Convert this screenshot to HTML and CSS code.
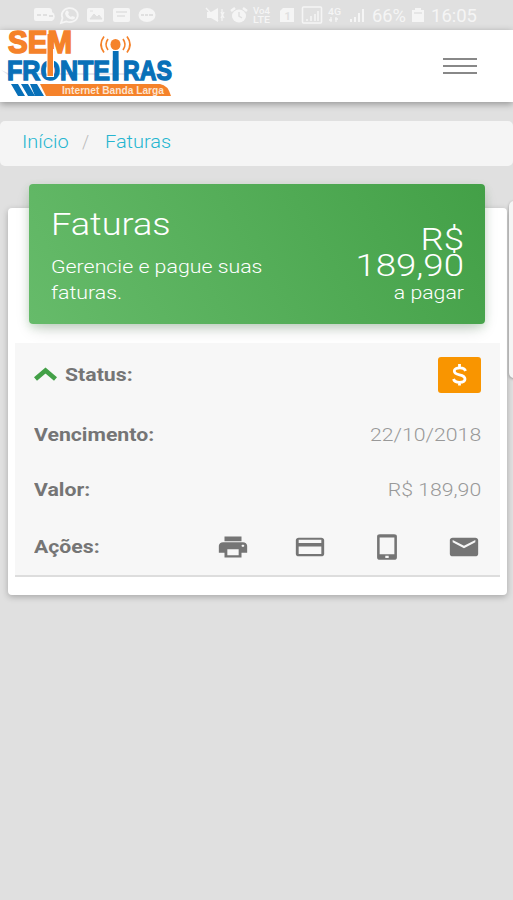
FILE: index.html
```html
<!DOCTYPE html>
<html lang="pt-BR">
<head>
  <meta charset="UTF-8" />
  <meta name="viewport" content="width=device-width, initial-scale=1.0"/>
  <title>Faturas - Sem Fronteiras</title>
  <link rel="stylesheet" href="styles.css">
</head>
<body>
  <!-- Status bar -->
  <div class="status-bar">
    <svg width="513" height="30" viewBox="0 0 513 30" fill="#f5f5f5">
      <path d="M36 8h13a3 3 0 0 1 3 3v1a5 5 0 0 1 0 9H36a2 2 0 0 1-2-2v-9a2 2 0 0 1 2-2z"/>
      <path d="M37 15h4m2 0h4m2 1h4" stroke="#e0e0e0" stroke-width="2"/>
      <path d="M61 23l1.500-5a8 7 0 1 1 4 3.500z" fill="none" stroke="#f5f5f5" stroke-width="1.800"/>
      <path d="M66 11q1-1 2 0l1 2-1 1q1 2 3 3l1-1 3 1q0 3-3 2.500-6-1-7-6z"/>
      <rect x="87" y="8" width="17" height="14" rx="2"/>
      <path d="M90 19l4-5 3 3 2-2 3 4zM90 11h3" stroke="#e0e0e0" fill="#e0e0e0"/>
      <rect x="113" y="8" width="17" height="14" rx="2"/>
      <path d="M116 12h11M117 16h8" stroke="#e0e0e0" stroke-width="1.500"/>
      <ellipse cx="147" cy="15" rx="8.500" ry="7"/>
      <path d="M141 15h3m1 0h3m1 0h4" stroke="#e0e0e0" stroke-width="2"/>
      <path d="M207 12h4l7-4v14l-7-4h-4z"/>
      <path d="M206 8l12 13M221 12l3 6m0-6l-3 6M222 9v12" stroke="#f5f5f5" stroke-width="1.300"/>
      <ellipse cx="239" cy="16" rx="7" ry="6.500"/>
      <path d="M231 11l4-3m8 0l4 3" stroke="#f5f5f5" stroke-width="2.500"/>
      <path d="M239 12v4l3 2" fill="none" stroke="#e0e0e0" stroke-width="1.500"/>
      <text x="253" y="14" class="tiny" textLength="17" lengthAdjust="spacingAndGlyphs">Vo4</text>
      <text x="253" y="22.500" class="tiny" textLength="17" lengthAdjust="spacingAndGlyphs">LTE</text>
      <path d="M283 8h11v14h-14V11z"/>
      <text x="284.500" y="20" class="sim">1</text>
      <rect x="302.500" y="7" width="19" height="16" rx="1" fill="none" stroke="#f5f5f5" stroke-width="1.500"/>
      <path d="M307 21v-2m4 2v-5m4 5v-7m3 7V11" stroke="#f5f5f5" stroke-width="1.500"/>
      <text x="328" y="15" class="tiny" textLength="13" lengthAdjust="spacingAndGlyphs">4G</text>
      <path d="M331 17v5m5-5v5M329 20h3m3-1h3" stroke="#f5f5f5" stroke-width="1.300"/>
      <path d="M351 22v-3m4 3v-5m4 5V13m4 9V9" stroke="#f5f5f5" stroke-width="2"/>
      <text x="372" y="22" class="clock" textLength="34" lengthAdjust="spacingAndGlyphs">66%</text>
      <path d="M415 8h6v2h3v12h-12V10h3z"/>
      <path d="M414 13h8" stroke="#e0e0e0" stroke-width="1.500"/>
      <text x="431" y="22" class="clock" textLength="46" lengthAdjust="spacingAndGlyphs">16:05</text>
    </svg>
  </div>

  <!-- Navbar -->
  <header class="navbar">
    <svg class="logo" width="180" height="72" viewBox="0 30 180 72">
      <path d="M1 70l7 3h166l-8 2H8z" fill="#e4e6ee"/>
      <text x="8" y="53" class="logo-sem" textLength="64" lengthAdjust="spacingAndGlyphs">SEM</text>
      <text y="80" class="logo-fronteiras"><tspan x="7" textLength="103" lengthAdjust="spacingAndGlyphs">FRONTE</tspan><tspan x="111.500">I</tspan><tspan x="123" textLength="49" lengthAdjust="spacingAndGlyphs">RAS</tspan></text>
      <path d="M46.500 49h7.500v28h-7.500z" fill="#fff"/>
      <path d="M47.500 34h5.500v42h-5.500z" fill="#f5822a"/>
      <path d="M112.800 51h5.800v29.500h-5.800z" fill="#0870b8"/>
      <ellipse cx="115.500" cy="44.500" rx="5" ry="5.500" fill="#f5822a"/>
      <path d="M108 39q-4 5.500 0 11M104 36.500q-6 8 0 16M123 39q4 5.500 0 11M127 36.500q6 8 0 16" fill="none" stroke="#f5822a" stroke-width="1.700"/>
      <path d="M11 84h7l7 12h-7zM21 84h7l7 12h-7zM30 84h7l7 12h-9z" fill="#0870b8"/>
      <path d="M40 84h120q8 1 11 12H46z" fill="#f5822a"/>
      <text x="62" y="94" class="logo-tag" textLength="102" lengthAdjust="spacingAndGlyphs">Internet Banda Larga</text>
    </svg>
    <div class="menu-btn">
      <span></span>
      <span></span>
      <span></span>
    </div>
  </header>

  <nav class="breadcrumb">
    <a class="crumb-home">Início</a>
    <span class="slash">/</span>
    <a class="crumb-page">Faturas</a>
  </nav>

  <main class="content">
    <section class="card">
      <div class="card-header">
        <div class="header-left">
          <h1>Faturas</h1>
          <p>Gerencie e pague suas<br>faturas.</p>
        </div>
        <div class="header-right">
          <div class="total">R$<br>189,90</div>
          <div class="total-label">a pagar</div>
        </div>
      </div>

      <div class="invoice">
        <div class="row row-status">
          <div class="status">
            <svg width="24" height="14" viewBox="0 0 24 14"><path d="M1.500 12l10-8.500 10 8.500" fill="none" stroke="#43a047" stroke-width="4.600"/></svg>
            <b>Status:</b>
          </div>
          <div class="badge">
            <svg width="18" height="24" viewBox="0 0 18 24"><path d="M14.500 8Q13.500 4.800 9 4.800 3.300 4.800 3.300 8q0 2.700 5.200 3.800 5.500 1.100 5.500 4.200 0 3.300-5.500 3.300-5 0-6-3.300M8.500 1v3.500M8.500 19v3.500" fill="none" stroke="#fff" stroke-width="2.800"/></svg>
          </div>
        </div>
        <div class="row">
          <b>Vencimento:</b>
          <span>22/10/2018</span>
        </div>
        <div class="row">
          <b>Valor:</b>
          <span>R$ 189,90</span>
        </div>
        <div class="row row-actions">
          <b>Ações:</b>
          <div class="actions">
            <!-- print -->
            <svg width="34" height="28" viewBox="0 0 24 24" preserveAspectRatio="none"><path d="M19 8H5c-1.660 0-3 1.340-3 3v6h4v4h12v-4h4v-6c0-1.660-1.340-3-3-3zm-3 11H8v-5h8v5zm3-7c-.55 0-1-.45-1-1s.45-1 1-1 1 .45 1 1-.45 1-1 1zm-1-9H6v4h12V3z"/></svg>
            <!-- card -->
            <svg width="34" height="28" viewBox="0 0 24 24" preserveAspectRatio="none"><path d="M20 4H4c-1.110 0-1.990.89-1.990 2L2 18c0 1.110.89 2 2 2h16c1.110 0 2-.89 2-2V6c0-1.110-.89-2-2-2zm0 14H4v-6.500h16V18zm0-9.500H4V5.800h16v2.700z"/></svg>
            <!-- phone -->
            <svg width="34" height="28" viewBox="0 0 24 24" preserveAspectRatio="none"><path fill-rule="evenodd" d="M17 1H7a2 2 0 0 0-2 2v18a2 2 0 0 0 2 2h10a2 2 0 0 0 2-2V3a2 2 0 0 0-2-2zM17.200 18.300H6.800V3.800h10.400zM10.800 19.500h2.400v2h-2.400z"/></svg>
            <!-- mail -->
            <svg width="34" height="28" viewBox="0 0 24 24" preserveAspectRatio="none"><path d="M20 4H4c-1.100 0-1.990.9-1.990 2L2 18c0 1.100.9 2 2 2h16c1.100 0 2-.9 2-2V6c0-1.100-.9-2-2-2zm0 4l-8 5-8-5V6l8 5 8-5v2z"/></svg>
          </div>
        </div>
      </div>
    </section>
    <aside class="next-card"></aside>
  </main>
</body>
</html>
```

FILE: styles.css
```css
* {
  margin: 0;
  padding: 0;
  box-sizing: border-box;
}
body {
  background: #e0e0e0;
  font-family: Roboto, sans-serif;
  font-size: 18px;
  font-weight: 300;
  height: 900px;
  overflow: hidden;
}
svg {
  display: block;
}
.status-bar {
  height: 30px;
}
.tiny {
  font-size: 8.5px;
  font-weight: 500;
}
.sim {
  font-size: 11px;
  font-weight: 700;
  fill: #e0e0e0;
}
.clock {
  font-size: 18px;
  font-weight: 400;
}
.navbar {
  display: flex;
  justify-content: space-between;
  align-items: center;
  height: 72px;
  padding-right: 36px;
  background: #fff;
  box-shadow: 0 2px 7px rgba(0,0,0,0.35);
}
.logo {
  overflow: visible;
}
.logo-sem {
  font: bold 31px "Liberation Sans", sans-serif;
  fill: #f5822a;
  stroke: #f5822a;
  stroke-width: 1.6px;
}
.logo-fronteiras {
  font: bold 28px "Liberation Sans", sans-serif;
  fill: #0870b8;
  stroke: #0870b8;
  stroke-width: 1.4px;
}
.logo-tag {
  font: bold 10.5px "Liberation Sans", sans-serif;
  fill: #fde3cf;
}
.menu-btn {
  display: flex;
  flex-direction: column;
  gap: 5px;
  width: 34px;
}
.menu-btn span {
  height: 2px;
  background: #888;
}
.breadcrumb {
  display: flex;
  align-items: center;
  height: 45px;
  margin-top: 19px;
  padding: 0 22px 4px;
  background: #f5f5f5;
  border-radius: 5px;
}
.breadcrumb a {
  color: #26b5d0;
}
.breadcrumb a,
.breadcrumb span,
.row b,
.row span,
h1,
.header-left p {
  display: block;
  transform-origin: left;
  white-space: nowrap;
}
.crumb-home {
  width: 47px;
  transform: scaleX(1.11);
}
.slash {
  width: 36px;
  padding-left: 13px;
  color: #bbb;
}
.crumb-page {
  transform: scaleX(1.11);
}
.content {
  display: flex;
  gap: 2px;
  margin-top: 42px;
  padding-left: 8px;
}
.card {
  flex: none;
  width: 499px;
  height: 387px;
  padding: 0 7px;
  background: #fff;
  border-radius: 4px;
  box-shadow: 0 2px 6px rgba(0,0,0,0.25);
}
.next-card {
  flex: none;
  width: 20px;
  height: 177px;
  margin-top: -7px;
  background: #f5f5f5;
  border-radius: 5px;
  box-shadow: 0 1px 3px rgba(0,0,0,0.35);
}
.card-header {
  display: flex;
  justify-content: space-between;
  height: 140px;
  margin: -24px 15px 0 14px;
  padding: 23px 21px 0 22px;
  background: linear-gradient(60deg, #66bb6a, #43a047);
  border-radius: 4px;
  box-shadow: 0 7px 16px -4px rgba(0,0,0,0.2), 0 3px 8px rgba(76,175,80,0.2);
  color: #fff;
}
h1 {
  font-size: 31px;
  font-weight: 300;
  line-height: 36px;
  transform: scaleX(1.165);
}
.header-left p {
  margin-top: 11px;
  line-height: 26px;
  transform: scaleX(1.185);
}
.header-right {
  padding-top: 20px;
  text-align: right;
}
.total {
  font-size: 31px;
  line-height: 25.5px;
  transform: scaleX(1.18);
  transform-origin: right;
}
.total-label {
  margin-top: 1px;
  line-height: 28px;
  transform: scaleX(1.18);
  transform-origin: right;
}
.invoice {
  height: 234px;
  margin-top: 19px;
  padding: 0 19px;
  background: #f7f7f7;
  border-bottom: 2px solid #ddd;
}
.row {
  display: flex;
  justify-content: space-between;
  align-items: center;
  height: 55px;
  color: #999;
}
.row b {
  color: #757575;
  font-weight: 700;
  transform: scaleX(1.18);
}
.row span {
  transform: scaleX(1.18);
  transform-origin: right;
}
.row-status {
  height: 64px;
}
.row-actions {
  height: 59px;
}
.status {
  display: flex;
  align-items: center;
  gap: 7px;
  margin-top: -2px;
}
.badge {
  display: flex;
  align-items: center;
  justify-content: center;
  width: 43px;
  height: 36px;
  background: #f99500;
  border-radius: 3px;
}
.actions {
  display: flex;
  gap: 43px;
  fill: #757575;
}
```
